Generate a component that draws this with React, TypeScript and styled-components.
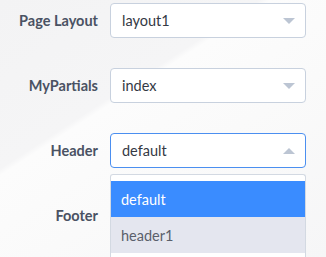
import { Fragment } from "react"
import styled, { createGlobalStyle } from "styled-components"

const GlobalStyle = createGlobalStyle`
    html, body {
        margin: 0;
        padding: 0;
    }
    body {
        font-family: Lato, "Noto Sans", sans-serif;
        background: #f5f5f6;
    }
`

const Page = styled.div`
    width: 326px;
    height: 257px;
    overflow: hidden;
    background: linear-gradient(147deg, #f3f3f4 0%, #f5f5f6 36%, #fcfcfc 37.5%, #fafafa 60%, #f6f6f7 100%);
`

const Form = styled.div`
    display: grid;
    grid-template-columns: 98px 196px;
    column-gap: 12px;
    row-gap: 30px;
    padding-top: 3px;
`

const Label = styled.label`
    display: flex;
    align-items: center;
    justify-content: flex-end;
    height: 35px;
    font-size: 14.5px;
    font-weight: 700;
    color: #4a5263;
`

const Field = styled.div`
    position: relative;
`

const Select = styled.div<{ $open?: boolean }>`
    box-sizing: border-box;
    height: 35px;
    display: flex;
    align-items: center;
    justify-content: space-between;
    padding: 0 10px 0 11px;
    background: #fff;
    border: 1px solid ${p => (p.$open ? "#4b8ff0" : "#c8d1de")};
    border-radius: 4px;
    font-size: 14.5px;
    color: #343944;
`

const Arrow = styled.span<{ $up?: boolean }>`
    width: 0;
    height: 0;
    border-left: 6px solid transparent;
    border-right: 6px solid transparent;
    ${p => p.$up ? "border-bottom: 6px solid #bcc5d3;" : "border-top: 6px solid #bcc5d3;"}
`

const Menu = styled.ul`
    position: absolute;
    top: 41px;
    left: 0;
    right: 0;
    margin: 0;
    padding: 6px 0 0;
    list-style: none;
    background: #fff;
    border: 1px solid #d3d9e2;
    border-bottom: none;
    border-radius: 3px 3px 0 0;
    height: 100px;
    z-index: 2;
`

const Option = styled.li<{ $active?: boolean; $hover?: boolean }>`
    height: 36px;
    display: flex;
    align-items: center;
    padding-left: 10px;
    font-size: 14.5px;
    color: ${p => (p.$active ? "#fff" : "#5a5f6b")};
    background: ${p => (p.$active ? "#3a8cff" : p.$hover ? "#e4e6ef" : "#fff")};
`

const rows = [
    { label: "Page Layout", value: "layout1" },
    { label: "MyPartials", value: "index" },
    { label: "Header", value: "default", open: true },
    { label: "Footer", value: "default" },
]

const App = () => {
    return (
        <Page>
            <GlobalStyle />
            <Form>
                {rows.map(row => (
                    <Fragment key={row.label}>
                        <Label>{row.label}</Label>
                        <Field>
                            <Select $open={row.open}>
                                {row.value}
                                <Arrow $up={row.open} />
                            </Select>
                            {row.open && (
                                <Menu>
                                    <Option $active>default</Option>
                                    <Option $hover>header1</Option>
                                    <Option />
                                </Menu>
                            )}
                        </Field>
                    </Fragment>
                ))}
            </Form>
        </Page>
    )
}

export default App
